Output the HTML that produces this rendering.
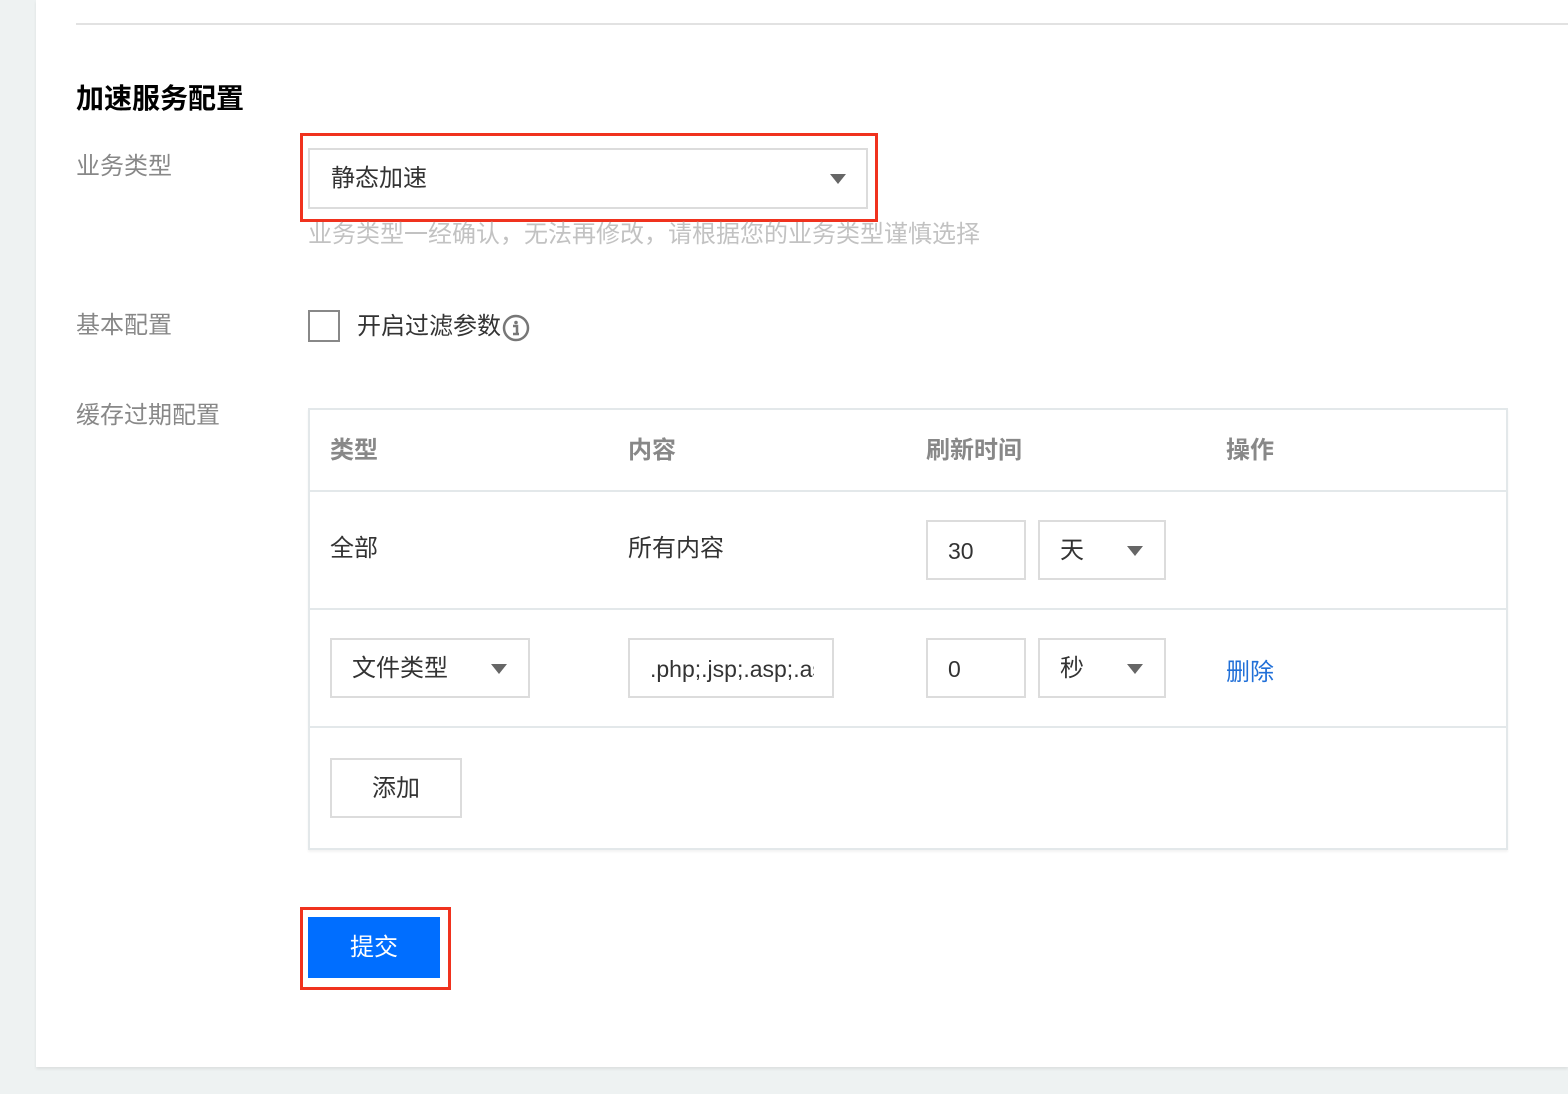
<!DOCTYPE html>
<html><head><meta charset="utf-8"><style>
*{margin:0;padding:0;box-sizing:border-box}
body{width:1568px;height:1094px;background:#eef2f2;position:relative;overflow:hidden;font-family:"Liberation Sans","Noto Sans CJK SC",sans-serif;}
.panel{position:absolute;left:36px;top:0;width:1532px;height:1067px;background:#fff;box-shadow:0 2px 3px rgba(0,0,0,.08)}
.a{position:absolute;white-space:nowrap}
.lbl{font-size:24px;color:#888;line-height:28px}
.box{position:absolute;border:2px solid #dcdcdc;background:#fff;font-size:23px;color:#333;line-height:28px}
.tri{position:absolute;width:0;height:0;border-left:8px solid transparent;border-right:8px solid transparent;border-top:10px solid #666}
.red{position:absolute;border:3px solid #f0321e}
.hl{position:absolute;left:308px;width:1199px;height:2px;background:#e3e8ea}
.th{font-size:24px;font-weight:bold;color:#888;line-height:28px}
.td{font-size:24px;color:#333;line-height:28px}
</style></head><body>
<div class="panel"></div>
<div class="a" style="left:76px;top:23px;width:1492px;height:2px;background:#e2e2e2"></div>
<div class="a" style="left:76px;top:83px;font-size:28px;font-weight:bold;color:#000;line-height:32px">加速服务配置</div>

<div class="a lbl" style="left:76px;top:153px">业务类型</div>
<div class="red" style="left:300px;top:133px;width:578px;height:89px"></div>
<div class="box" style="left:308px;top:148px;width:560px;height:61px"><span class="a" style="left:21px;top:15px;font-size:24px">静态加速</span></div>
<div class="tri" style="left:830px;top:174px"></div>
<div class="a" style="left:308px;top:221px;font-size:24px;color:#c2c2c2;line-height:28px">业务类型一经确认，无法再修改，请根据您的业务类型谨慎选择</div>

<div class="a lbl" style="left:76px;top:312px">基本配置</div>
<div class="a" style="left:308px;top:310px;width:32px;height:32px;border:2px solid #888"></div>
<div class="a td" style="left:357px;top:313px">开启过滤参数</div>
<svg class="a" style="left:502px;top:314px" width="28" height="28" viewBox="0 0 28 28"><circle cx="14" cy="14" r="12" fill="none" stroke="#777" stroke-width="2.5"/><circle cx="14" cy="8.5" r="1.8" fill="#777"/><path d="M11 12h4v8h2M11 20h6" stroke="#777" stroke-width="2.5" fill="none"/></svg>

<div class="a lbl" style="left:76px;top:402px">缓存过期配置</div>
<div class="a" style="left:308px;top:408px;width:1200px;height:442px;border:2px solid #e3e8ea;box-shadow:0 2px 2px rgba(0,0,0,.05)"></div>
<div class="hl" style="top:490px"></div>
<div class="hl" style="top:608px"></div>
<div class="hl" style="top:726px"></div>
<div class="a th" style="left:330px;top:437px">类型</div>
<div class="a th" style="left:628px;top:437px">内容</div>
<div class="a th" style="left:926px;top:437px">刷新时间</div>
<div class="a th" style="left:1226px;top:437px">操作</div>

<div class="a td" style="left:330px;top:535px">全部</div>
<div class="a td" style="left:628px;top:535px">所有内容</div>
<div class="box" style="left:926px;top:520px;width:100px;height:60px"><span class="a" style="left:20px;top:15px">30</span></div>
<div class="box" style="left:1038px;top:520px;width:128px;height:60px"><span class="a" style="left:20px;top:15px;font-size:24px">天</span></div>
<div class="tri" style="left:1127px;top:546px"></div>

<div class="box" style="left:330px;top:638px;width:200px;height:60px"><span class="a" style="left:20px;top:15px;font-size:24px">文件类型</span></div>
<div class="tri" style="left:491px;top:664px"></div>
<div class="box" style="left:628px;top:638px;width:206px;height:60px"><span class="a" style="left:20px;top:15px;width:164px;overflow:hidden">.php;.jsp;.asp;.aspx</span></div>
<div class="box" style="left:926px;top:638px;width:100px;height:60px"><span class="a" style="left:20px;top:15px">0</span></div>
<div class="box" style="left:1038px;top:638px;width:128px;height:60px"><span class="a" style="left:20px;top:15px;font-size:24px">秒</span></div>
<div class="tri" style="left:1127px;top:664px"></div>
<div class="a" style="left:1226px;top:659px;font-size:24px;color:#2170d8;line-height:28px">删除</div>

<div class="box" style="left:330px;top:758px;width:132px;height:60px"><span class="a" style="left:40px;top:15px;font-size:24px">添加</span></div>

<div class="red" style="left:300px;top:907px;width:151px;height:83px"></div>
<div class="a" style="left:308px;top:917px;width:132px;height:61px;background:#006eff;color:#fff;font-size:24px;line-height:61px;text-align:center">提交</div>
</body></html>
